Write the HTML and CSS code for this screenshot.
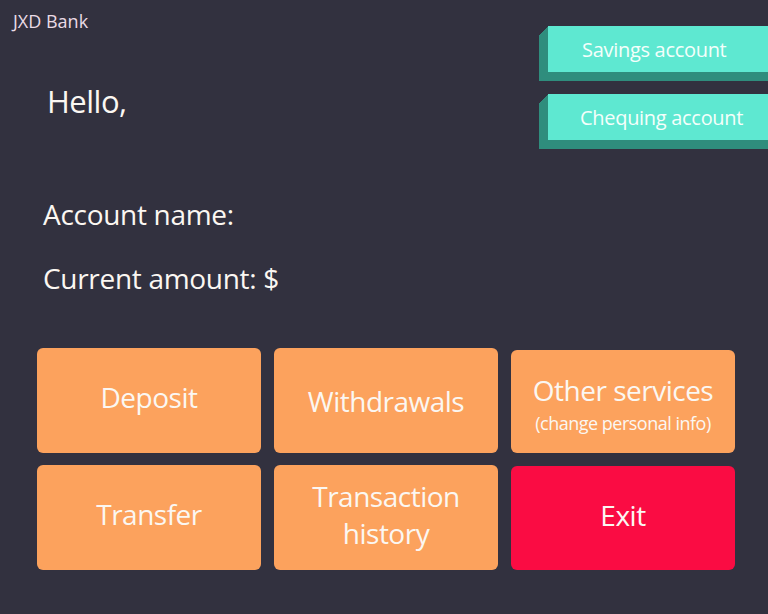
FILE: index.html
```html
<!DOCTYPE html>
<html>
<head>
<meta charset="utf-8">
<link rel="stylesheet" href="styles.css">
</head>
<body>
<div class="screen">
  <div class="brand">JXD Bank</div>
  <div class="accounts">
    <div class="acct">Savings account</div>
    <div class="acct">Chequing account</div>
  </div>
  <div class="hello">Hello,</div>
  <div class="info">
    <div class="line">Account name:</div>
    <div class="line">Current amount: $</div>
  </div>
  <div class="grid">
    <div class="btn">Deposit</div>
    <div class="btn low">Withdrawals</div>
    <div class="btn other"><span class="main">Other services</span><span class="sub">(change personal info)</span></div>
    <div class="btn">Transfer</div>
    <div class="btn">Transaction<br>history</div>
    <div class="btn exit">Exit</div>
  </div>
</div>
</body>
</html>
```
FILE: styles.css
```css
html, body {
  margin: 0;
  padding: 0;
  background: #32313f;
}
body {
  font-family: "Open Sans", "Noto Sans", sans-serif;
  color: #fbf7f2;
}
.screen {
  position: relative;
  width: 768px;
  height: 614px;
  overflow: hidden;
  background: #32313f;
}
.brand {
  position: absolute;
  left: 13px;
  top: 9px;
  font-size: 18px;
  color: #eadbe6;
  letter-spacing: 0;
}
.accounts {
  position: absolute;
  left: 548px;
  top: 26px;
  width: 230px;
  display: flex;
  flex-direction: column;
  gap: 22px;
}
.acct {
  height: 46px;
  background: #5ee8d1;
  color: #f4fffb;
  font-size: 20px;
  letter-spacing: -0.3px;
  display: flex;
  align-items: center;
  padding-left: 34px;
  box-shadow: -1px 1px 0 #2f8d7d, -2px 2px 0 #2f8d7d, -3px 3px 0 #2f8d7d,
    -4px 4px 0 #2f8d7d, -5px 5px 0 #2f8d7d, -6px 6px 0 #2f8d7d,
    -7px 7px 0 #2f8d7d, -8px 8px 0 #2f8d7d, -9px 9px 0 #2f8d7d;
}
.acct + .acct {
  padding-left: 32px;
}
.hello {
  position: absolute;
  left: 47px;
  top: 80px;
  font-size: 31px;
  letter-spacing: -0.5px;
}
.info {
  position: absolute;
  left: 43px;
  top: 193px;
  display: flex;
  flex-direction: column;
  gap: 22px;
}
.line {
  font-size: 28px;
  line-height: 42px;
  letter-spacing: -0.3px;
}
.grid {
  position: absolute;
  left: 37px;
  top: 348px;
  width: 698px;
  display: grid;
  grid-template-columns: repeat(3, 1fr);
  grid-template-rows: 105px 105px;
  gap: 12px 13px;
}
.btn {
  background: #fca25d;
  border-radius: 6px;
  display: flex;
  flex-direction: column;
  align-items: center;
  justify-content: center;
  text-align: center;
  font-size: 28px;
  line-height: 37px;
  letter-spacing: -0.5px;
  padding-bottom: 6px;
  box-sizing: border-box;
}
.btn.low {
  padding-bottom: 0;
  padding-top: 2px;
}
.btn.other {
  margin-top: 2px;
  padding-bottom: 0;
  padding-top: 6px;
}
.main {
  font-size: 28px;
  line-height: 32px;
}
.sub {
  font-size: 18px;
  line-height: 24px;
  letter-spacing: -0.5px;
  margin-top: 5px;
}
.exit {
  background: #fa0c43;
  margin-top: 1px;
  padding-bottom: 5px;
}
```
